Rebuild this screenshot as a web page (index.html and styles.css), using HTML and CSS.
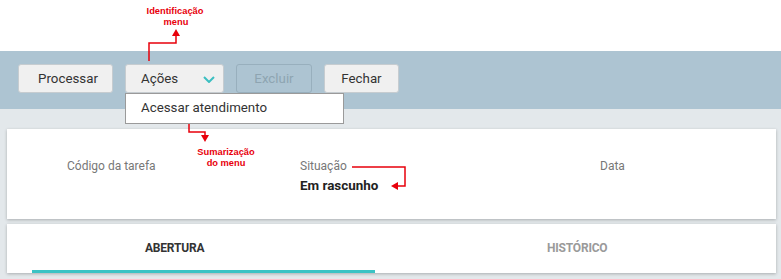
FILE: index.html
```html
<!DOCTYPE html>
<html lang="pt">
<head>
<meta charset="utf-8">
<title>Tarefa</title>
<link rel="stylesheet" href="styles.css">
</head>
<body>
<div class="top"></div>
<div class="toolbar">
  <button class="btn btn-processar">Processar</button>
  <div class="menu-wrap">
    <button class="btn btn-acoes"><span>Ações</span>
      <svg class="chev" width="12" height="7" viewBox="0 0 12 7"><polyline points="1,1 6,6 11,1" fill="none" stroke="#3bbfc1" stroke-width="2"/></svg>
    </button>
    <div class="dropdown">Acessar atendimento</div>
  </div>
  <button class="btn btn-excluir" disabled>Excluir</button>
  <button class="btn btn-fechar">Fechar</button>
</div>
<div class="main">
  <div class="card summary">
    <div class="field f1"><div class="label">Código da tarefa</div></div>
    <div class="field f2"><div class="label">Situação</div><div class="value">Em rascunho</div></div>
    <div class="field f3"><div class="label">Data</div></div>
  </div>
  <div class="card tabs">
    <div class="tab active"><span>ABERTURA</span></div>
    <div class="tab t2"><span>HISTÓRICO</span></div>
  </div>
</div>
<svg class="notes" width="781" height="279" viewBox="0 0 781 279">
  <g fill="none" stroke="#e8000b" stroke-width="1.5">
    <polyline points="149,61 149,43 176,43 176,35"/>
    <polyline points="189,124 189,132 205,132 205,136"/>
    <polyline points="352,167 405,167 405,186 397,186"/>
  </g>
  <g fill="#e8000b">
    <polygon points="172,36 180,36 176,29"/>
    <polygon points="201,135 209,135 205,142"/>
    <polygon points="398,182 398,190 391,186"/>
  </g>
  <g class="note-text" text-anchor="middle">
    <text x="175" y="14">Identificação</text>
    <text x="176" y="25">menu</text>
    <text x="226" y="155">Sumarização</text>
    <text x="226" y="166">do menu</text>
  </g>
</svg>
</body>
</html>
```
FILE: styles.css
```css
* { box-sizing: border-box; }
html, body { margin: 0; padding: 0; }
body {
  width: 781px;
  height: 279px;
  overflow: hidden;
  font-family: Roboto, "Liberation Sans", sans-serif;
  background: #e3e8eb;
  position: relative;
}
.top { height: 51px; background: #fff; }
.toolbar {
  height: 58px;
  background: #adc4d2;
  padding: 13px 0 0 18px;
  display: flex;
  align-items: flex-start;
  gap: 12px;
}
.btn {
  height: 29px;
  border: 1px solid #c6ccd0;
  border-radius: 3px;
  background: #f0f0f0;
  color: #333;
  font: 13.3px Roboto, "Liberation Sans", sans-serif;
  padding: 0;
  margin: 0;
  display: flex;
  align-items: center;
  justify-content: center;
}
.btn-processar { width: 95px; padding-left: 5px; }
.menu-wrap { position: relative; }
.btn-acoes { width: 99px; justify-content: flex-start; padding-left: 15px; }
.btn-acoes .chev { margin-left: 25px; margin-top: 2px; }
.btn-excluir {
  width: 76px;
  background: transparent;
  border-color: #98afbd;
  color: #8ea4b1;
}
.btn-fechar { width: 75px; }
.dropdown {
  position: absolute;
  left: 0;
  top: 29px;
  width: 219px;
  height: 31px;
  background: #fff;
  border: 1px solid #9a9a9a;
  font-size: 13.3px;
  color: #333;
  padding: 6px 0 0 15px;
  z-index: 5;
}
.main { padding: 20px 5px 0 7px; }
.card {
  background: #fff;
  box-shadow: 0 1px 3px rgba(0,0,0,0.25);
}
.summary {
  height: 90px;
  display: grid;
  grid-template-columns: 233px 300px 1fr;
  padding: 30px 0 0 60px;
}
.label { font-size: 12px; color: #777; line-height: 14px; }
.value { font-size: 13.4px; font-weight: 700; color: #222; margin-top: 5px; line-height: 16px; }
.tabs {
  margin-top: 5px;
  height: 49px;
  display: flex;
  padding-left: 25px;
}
.tab {
  height: 49px;
  font-size: 12px;
  font-weight: 700;
  color: #9a9a9a;
  padding-top: 17px;
  line-height: 14px;
  letter-spacing: -0.2px;
}
.tab.active {
  width: 343px;
  color: #333;
  padding-left: 113px;
  border-bottom: 3px solid #3bc3c4;
  height: 49px;
}
.tab.t2 { padding-left: 172px; }
.notes {
  position: absolute;
  left: 0;
  top: 0;
  pointer-events: none;
  z-index: 10;
}
.note-text text {
  font-family: "Liberation Sans", Arial, sans-serif;
  font-weight: 700;
  font-size: 9.3px;
  fill: #e8000b;
}
```
